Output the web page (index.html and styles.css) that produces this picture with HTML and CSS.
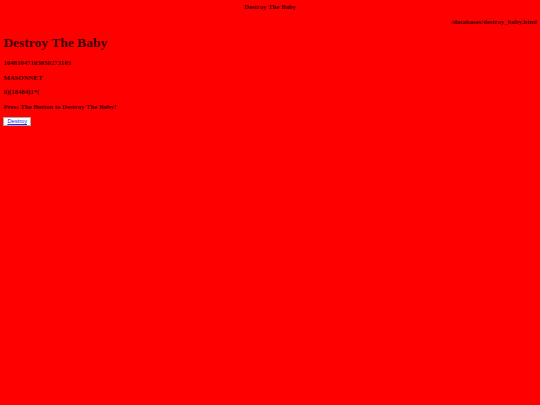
FILE: index.html
```html
<!DOCTYPE html>
<html>
<head>
<meta charset="utf-8">
<title>Destroy The Baby</title>
<link rel="stylesheet" href="styles.css">
</head>
<body>
<div class="title">Destroy The Baby</div>
<p class="path">/databases/destroy_baby.html</p>
<h1 class="heading">Destroy The Baby</h1>
<p class="line">10481047103850273103</p>
<p class="line">MASONNET</p>
<p class="line">0)(18484)1*(</p>
<p class="line">Press The Button to Destroy The Baby!</p>
<button class="btn" type="button"><a class="btn-link" href="#">Destroy</a></button>
</body>
</html>
```

FILE: styles.css
```css
html {
  font-size: 6.75px;
  background: #ff0000;
}
body {
  margin: 0.5rem;
  font-family: "Liberation Serif", "Times New Roman", serif;
  font-size: 1rem;
  line-height: 1.15;
  color: #3a0000;
  background: #ff0000;
}
.title {
  text-align: center;
  font-weight: bold;
}
.path {
  text-align: right;
  font-weight: bold;
  margin: 1em 0;
}
.heading {
  font-size: 2em;
  margin: 0.67em 0;
  font-weight: bold;
}
.line {
  font-weight: bold;
  margin: 1em 0;
}
.btn {
  font-family: "Liberation Sans", Arial, sans-serif;
  font-size: 0.85rem;
  background: #fff;
  border: 1px solid #aaa;
  padding: 0 3px;
  margin: -1px 0 0;
  line-height: 1.2;
}
.btn-link {
  color: #2a2ae8;
  text-decoration: underline;
}
```
